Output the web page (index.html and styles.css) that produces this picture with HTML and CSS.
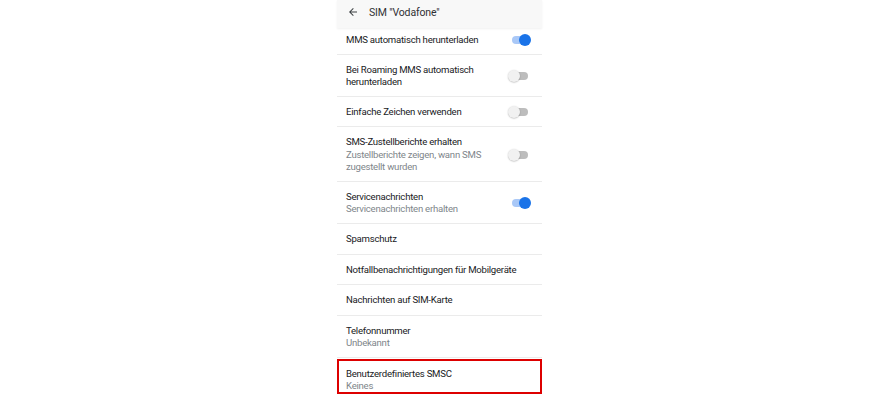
FILE: index.html
```html
<!DOCTYPE html>
<html lang="de">
<head>
    <meta charset="UTF-8">
    <meta name="viewport" content="width=device-width, initial-scale=1.0">
    <title>SIM "Vodafone"</title>
    <link rel="stylesheet" href="styles.css">
</head>
<body>
    <div class="phone">
        <div class="topbar">
            <span class="back">
                <svg width="12" height="12" viewBox="0 0 24 24"><path d="M20 11H7.83l5.59-5.59L12 4l-8 8 8 8 1.41-1.41L7.83 13H20v-2z" fill="#3c4043"/></svg>
            </span>
            <span class="title">SIM "Vodafone"</span>
        </div>

        <div class="list">
            <div class="row first">
                <div class="text"><div class="label">MMS automatisch herunterladen</div></div>
                <span class="switch on"><span class="track"></span><span class="thumb"></span></span>
            </div>
            <div class="row">
                <div class="text"><div class="label">Bei Roaming MMS automatisch herunterladen</div></div>
                <span class="switch"><span class="track"></span><span class="thumb"></span></span>
            </div>
            <div class="row">
                <div class="text"><div class="label">Einfache Zeichen verwenden</div></div>
                <span class="switch"><span class="track"></span><span class="thumb"></span></span>
            </div>
            <div class="row">
                <div class="text">
                    <div class="label">SMS-Zustellberichte erhalten</div>
                    <div class="sub gap">Zustellberichte zeigen, wann SMS zugestellt wurden</div>
                </div>
                <span class="switch"><span class="track"></span><span class="thumb"></span></span>
            </div>
            <div class="row">
                <div class="text">
                    <div class="label">Servicenachrichten</div>
                    <div class="sub">Servicenachrichten erhalten</div>
                </div>
                <span class="switch on"><span class="track"></span><span class="thumb"></span></span>
            </div>
            <div class="row plain">
                <div class="text"><div class="label">Spamschutz</div></div>
            </div>
            <div class="row plain">
                <div class="text"><div class="label">Notfallbenachrichtigungen für Mobilgeräte</div></div>
            </div>
            <div class="row plain">
                <div class="text"><div class="label">Nachrichten auf SIM-Karte</div></div>
            </div>
            <div class="row">
                <div class="text">
                    <div class="label">Telefonnummer</div>
                    <div class="sub">Unbekannt</div>
                </div>
            </div>
            <div class="row marked">
                <div class="text">
                    <div class="label">Benutzerdefiniertes SMSC</div>
                    <div class="sub">Keines</div>
                </div>
            </div>
        </div>
    </div>
</body>
</html>
```

FILE: styles.css
```css
body {
    font-family: Roboto, 'Noto Sans', sans-serif;
    margin: 0;
    background: #fff;
    color: #202124;
}

.phone {
    width: 205px;
    margin: 0 auto;
}

.topbar {
    height: 28px;
    display: flex;
    align-items: center;
    padding-left: 10px;
    padding-bottom: 4px;
    box-sizing: border-box;
    background: #f8f8f8;
    box-shadow: 0 1px 2px rgba(0, 0, 0, 0.06);
}

.back {
    display: flex;
    width: 12px;
    height: 12px;
    margin-right: 10px;
}

.title {
    font-size: 10.5px;
    letter-spacing: -0.15px;
    color: #303134;
}

.row {
    display: flex;
    align-items: center;
    justify-content: space-between;
    padding: 9px 0 8px 9px;
    border-bottom: 1px solid #ebebeb;
}

    .row.first {
        padding-top: 6px;
    }

    .row.plain {
        padding-bottom: 8.5px;
    }

.text {
    flex: 1;
    font-size: 9.6px;
    line-height: 12px;
    letter-spacing: -0.25px;
}

    .text:not(:last-child) {
        padding-right: 14px;
    }

.label {
    color: #202124;
}

.sub {
    color: #80868b;
}

    .sub.gap {
        margin-top: 1px;
    }

.row.marked {
    margin-top: 1px;
    padding: 7px 7px 0 7px;
    border: 2px solid #dd0000;
}

.switch {
    position: relative;
    width: 23px;
    height: 12px;
    margin-right: 11px;
    flex-shrink: 0;
}

    .switch .track {
        position: absolute;
        left: 4px;
        right: 3px;
        top: 2px;
        height: 8px;
        border-radius: 4px;
        background: #bdbdbd;
    }

    .switch .thumb {
        position: absolute;
        left: 0;
        top: 0;
        width: 12px;
        height: 12px;
        border-radius: 50%;
        background: #f1f1f1;
        box-shadow: 0 0.5px 1.5px rgba(0, 0, 0, 0.3);
    }

    .switch.on .track {
        background: #a9c8f7;
    }

    .switch.on .thumb {
        left: auto;
        right: 0;
        background: #1a73e8;
        box-shadow: none;
    }
```
